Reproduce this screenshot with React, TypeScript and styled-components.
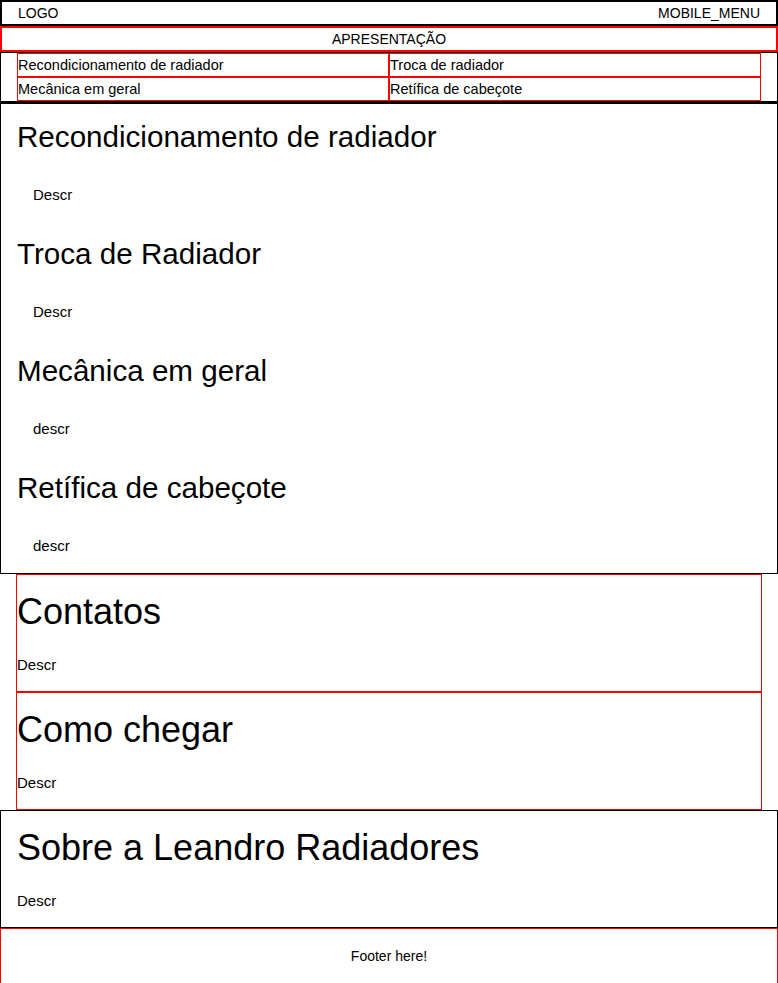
import styled, { createGlobalStyle } from "styled-components"

const GlobalStyle = createGlobalStyle`
    * { box-sizing: border-box; }
    body {
        margin: 0;
        background: #fff;
        color: #000;
        font-family: "Liberation Sans", Arial, sans-serif;
    }
`

const Header = styled.header`
    height: 26px;
    border: 2px solid #000;
    padding: 0 16px;
    display: flex;
    justify-content: space-between;
    align-items: center;
    font-size: 14px;
`

const Banner = styled.div`
    height: 26px;
    border: 2px solid #f00;
    display: flex;
    justify-content: center;
    align-items: center;
    font-size: 14px;
`

const Nav = styled.nav`
    border: 1px solid #000;
    border-width: 1px 1px 2px;
    padding: 0 16px;
`

const NavList = styled.ul`
    list-style: none;
    margin: 0;
    padding: 0;
    display: grid;
    grid-template-columns: 1fr 1fr;
`

const NavItem = styled.li`
    height: 24px;
    border: 1px solid #f00;
    font-size: 14.5px;
    line-height: 22px;
`

const Services = styled.section`
    border: 1px solid #000;
    padding: 16px 16px 19px;
    display: flex;
    flex-direction: column;
    gap: 34px;
`

const Service = styled.article``

const ServiceTitle = styled.h2`
    margin: 0 0 32px;
    font-size: 29.6px;
    font-weight: 400;
    line-height: 34px;
`

const ServiceText = styled.p`
    margin: 0 0 0 16px;
    font-size: 15px;
    line-height: 17px;
`

const Block = styled.section<{ $red?: boolean; $inset?: boolean }>`
    height: 118px;
    border: 1px solid ${p => (p.$red ? "#f00" : "#000")};
    margin: ${p => (p.$inset ? "0 16px" : "0")};
    padding: ${p => (p.$inset ? "16px 0 0" : "16px 16px 0")};
`

const BlockTitle = styled.h1`
    margin: 0 0 24px;
    font-size: 36px;
    font-weight: 400;
    line-height: 41px;
`

const BlockText = styled.p`
    margin: 0;
    font-size: 15px;
    line-height: 17px;
`

const Footer = styled.footer`
    height: 56px;
    border: 1px solid #f00;
    display: flex;
    justify-content: center;
    align-items: center;
    font-size: 14px;
`

const services = [
    { title: "Recondicionamento de radiador", text: "Descr" },
    { title: "Troca de Radiador", text: "Descr" },
    { title: "Mecânica em geral", text: "descr" },
    { title: "Retífica de cabeçote", text: "descr" },
]

export default function App() {
    return (
        <>
            <GlobalStyle />
            <Header>
                <span>LOGO</span>
                <span>MOBILE_MENU</span>
            </Header>
            <Banner>APRESENTAÇÃO</Banner>
            <Nav>
                <NavList>
                    <NavItem>Recondicionamento de radiador</NavItem>
                    <NavItem>Troca de radiador</NavItem>
                    <NavItem>Mecânica em geral</NavItem>
                    <NavItem>Retífica de cabeçote</NavItem>
                </NavList>
            </Nav>
            <Services>
                {services.map(s => (
                    <Service key={s.title}>
                        <ServiceTitle>{s.title}</ServiceTitle>
                        <ServiceText>{s.text}</ServiceText>
                    </Service>
                ))}
            </Services>
            <Block $red $inset>
                <BlockTitle>Contatos</BlockTitle>
                <BlockText>Descr</BlockText>
            </Block>
            <Block $red $inset>
                <BlockTitle>Como chegar</BlockTitle>
                <BlockText>Descr</BlockText>
            </Block>
            <Block>
                <BlockTitle>Sobre a Leandro Radiadores</BlockTitle>
                <BlockText>Descr</BlockText>
            </Block>
            <Footer>Footer here!</Footer>
        </>
    )
}
